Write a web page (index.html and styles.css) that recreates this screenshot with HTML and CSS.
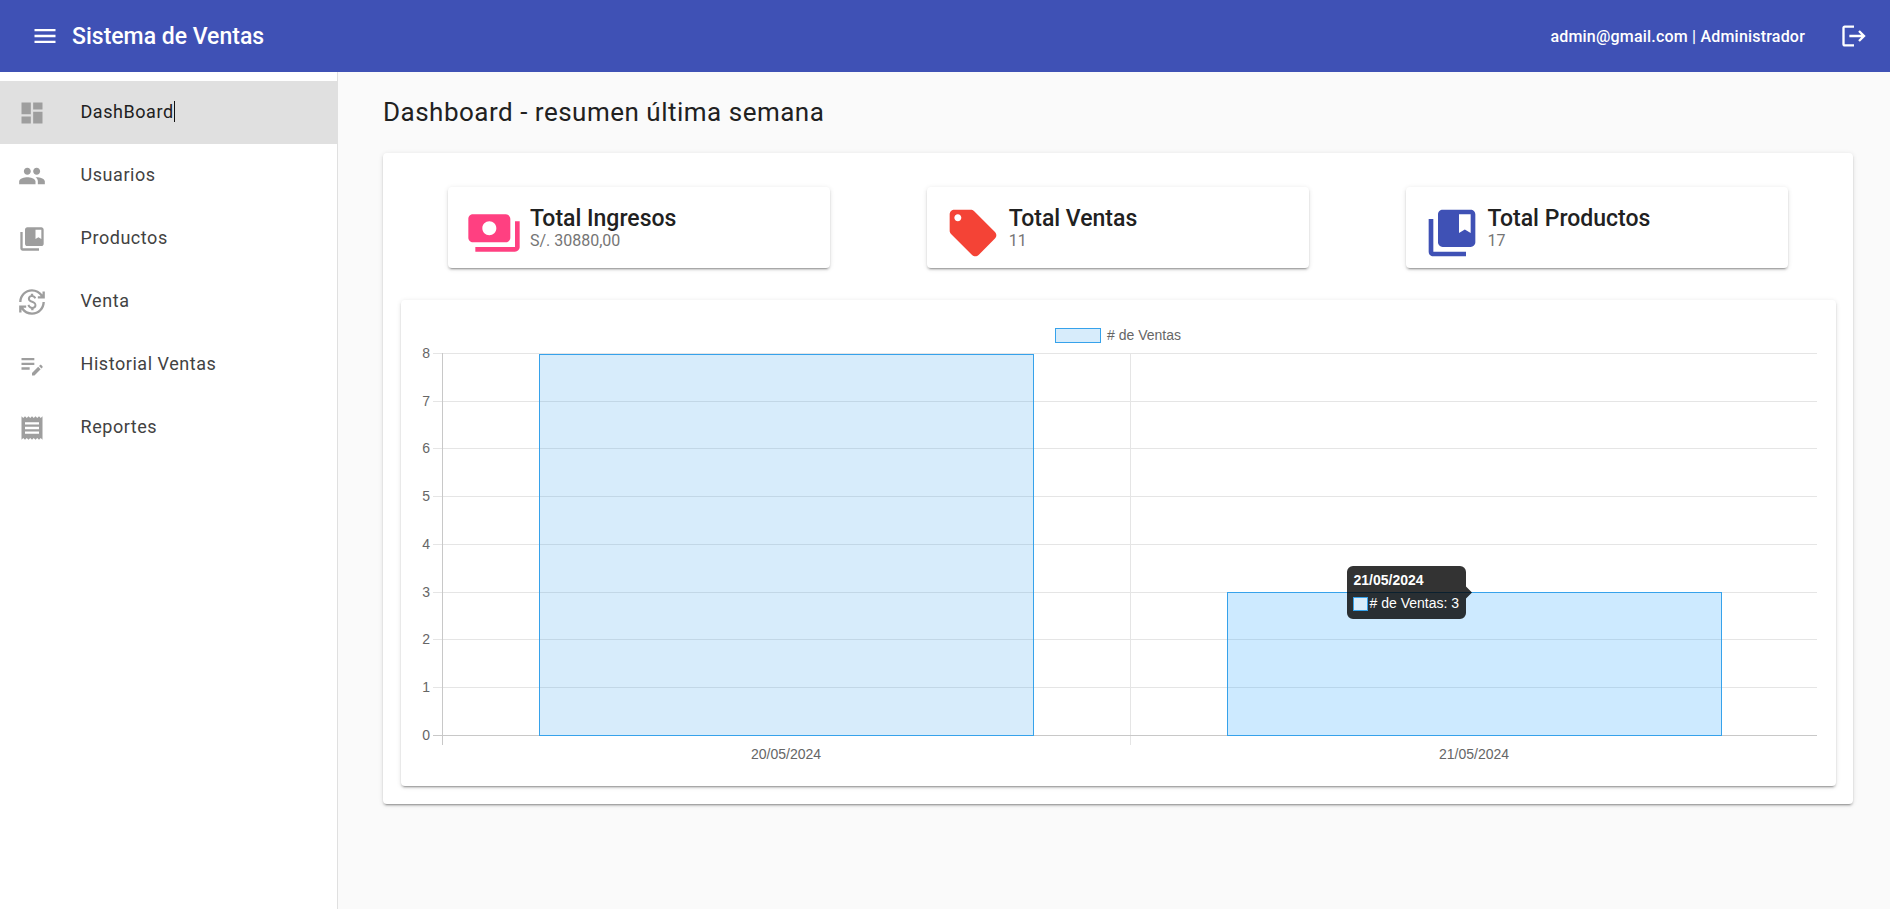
FILE: index.html
```html
<!DOCTYPE html>
<html lang="es">
<head>
<meta charset="utf-8">
<title>Sistema de Ventas</title>
<link rel="stylesheet" href="styles.css">
</head>
<body>
<header class="toolbar">
  <svg class="menu-icon" viewBox="0 0 24 24"><path d="M3 18h18v-2H3v2zm0-5h18v-2H3v2zm0-7v2h18V6H3z"/></svg>
  <span class="brand">Sistema de Ventas</span>
  <span class="user">admin@gmail.com | Administrador</span>
  <svg class="logout-icon" viewBox="0 0 24 24"><path d="M17 7l-1.41 1.41L18.17 11H8v2h10.17l-2.58 2.58L17 17l5-5zM4 5h8V3H4c-1.1 0-2 .9-2 2v14c0 1.1.9 2 2 2h8v-2H4V5z"/></svg>
</header>
<div class="shell">
  <nav class="sidebar">
    <a class="nav-item active">
      <svg class="nav-icon" viewBox="0 0 24 24"><path d="M3 13h8V3H3v10zm0 8h8v-6H3v6zm10 0h8V11h-8v10zm0-18v6h8V3h-8z"/></svg>
      <span class="nav-label caret">DashBoard</span>
    </a>
    <a class="nav-item">
      <svg class="nav-icon" viewBox="0 0 24 24"><path d="M16 11c1.66 0 2.99-1.34 2.99-3S17.66 5 16 5c-1.66 0-3 1.34-3 3s1.34 3 3 3zm-8 0c1.66 0 2.99-1.34 2.99-3S9.66 5 8 5C6.34 5 5 6.34 5 8s1.34 3 3 3zm0 2c-2.33 0-7 1.17-7 3.5V19h14v-2.5c0-2.33-4.67-3.5-7-3.5zm8 0c-.29 0-.62.02-.97.05 1.16.84 1.97 1.97 1.97 3.45V19h6v-2.5c0-2.33-4.67-3.5-7-3.5z"/></svg>
      <span class="nav-label">Usuarios</span>
    </a>
    <a class="nav-item">
      <svg class="nav-icon" viewBox="0 0 24 24"><path d="M4 6H2v14c0 1.1.9 2 2 2h14v-2H4V6zm16-4H8c-1.1 0-2 .9-2 2v12c0 1.1.9 2 2 2h12c1.1 0 2-.9 2-2V4c0-1.1-.9-2-2-2zm0 10l-2.5-1.5L15 12V4h5v8z"/></svg>
      <span class="nav-label">Productos</span>
    </a>
    <a class="nav-item">
      <svg class="nav-icon" viewBox="0 0 24 24"><path d="M12.89 11.1c-1.78-.59-2.64-.96-2.64-1.9 0-1.02 1.11-1.39 1.81-1.39 1.31 0 1.79.99 1.9 1.34l1.58-.67c-.15-.44-.82-1.91-2.54-2.21V5h-2v1.29c-2.48.56-2.49 2.86-2.49 2.96 0 2.27 2.25 2.91 3.35 3.31 1.58.56 2.28 1.07 2.28 2.03 0 1.13-1.05 1.61-1.98 1.61-1.82 0-2.34-1.87-2.4-2.09l-1.66.67c.63 2.19 2.28 2.78 3.2 2.96V19h2v-1.25c.65-.11 2.5-.5 2.5-2.98 0-1.31-.57-2.46-2.91-3.67z"/><path d="M3 21H1v-6h6v2H4.52c1.65 2.41 4.4 4 7.48 4 4.97 0 9-4.03 9-9h2c0 6.08-4.92 11-11 11-3.72 0-7.01-1.85-9-4.67V21zM1 12C1 5.92 5.92 1 12 1c3.72 0 7.01 1.85 9 4.67V3h2v6h-6V7h2.48C17.83 4.59 15.08 3 12 3c-4.97 0-9 4.03-9 9H1z"/></svg>
      <span class="nav-label">Venta</span>
    </a>
    <a class="nav-item">
      <svg class="nav-icon" viewBox="0 0 24 24"><path d="M3 10h11v2H3v-2zm0-2h11V6H3v2zm0 8h7v-2H3v2zm15.01-3.13.71-.71c.39-.39 1.02-.39 1.41 0l.71.71c.39.39.39 1.02 0 1.41l-.71.71-2.12-2.12zm-.71.71-5.3 5.3V21h2.12l5.3-5.3-2.12-2.12z"/></svg>
      <span class="nav-label">Historial Ventas</span>
    </a>
    <a class="nav-item">
      <svg class="nav-icon" viewBox="0 0 24 24"><path d="M18 17H6v-2h12v2zm0-4H6v-2h12v2zm0-4H6V7h12v2zM3 22l1.5-1.5L6 22l1.5-1.5L9 22l1.5-1.5L12 22l1.5-1.5L15 22l1.5-1.5L18 22l1.5-1.5L21 22V2l-1.5 1.5L18 2l-1.5 1.5L15 2l-1.5 1.5L12 2l-1.5 1.5L9 2 7.5 3.5 6 2 4.5 3.5 3 2v20z"/></svg>
      <span class="nav-label">Reportes</span>
    </a>
  </nav>
  <main class="content">
    <h1 class="page-title">Dashboard - resumen última semana</h1>
    <section class="panel">
      <div class="stats">
        <div class="stat-col">
          <article class="stat-card">
            <svg class="stat-icon pink" viewBox="0 0 24 24"><path d="M19 14V6c0-1.1-.9-2-2-2H3c-1.1 0-2 .9-2 2v8c0 1.1.9 2 2 2h14c1.1 0 2-.9 2-2zm-9-1c-1.66 0-3-1.34-3-3s1.34-3 3-3 3 1.34 3 3-1.34 3-3 3zm13-6v11c0 1.1-.9 2-2 2H4v-2h17V7h2z"/></svg>
            <div class="stat-text">
              <div class="stat-title">Total Ingresos</div>
              <div class="stat-value">S/. 30880,00</div>
            </div>
          </article>
        </div>
        <div class="stat-col">
          <article class="stat-card">
            <svg class="stat-icon red" viewBox="0 0 24 24"><path d="M21.41 11.58l-9-9C12.05 2.22 11.55 2 11 2H4c-1.1 0-2 .9-2 2v7c0 .55.22 1.05.59 1.42l9 9c.36.36.86.58 1.41.58.55 0 1.05-.22 1.41-.59l7-7c.37-.36.59-.86.59-1.41 0-.55-.23-1.06-.59-1.42zM5.5 7C4.67 7 4 6.33 4 5.5S4.67 4 5.5 4 7 4.67 7 5.5 6.33 7 5.5 7z"/></svg>
            <div class="stat-text">
              <div class="stat-title">Total Ventas</div>
              <div class="stat-value">11</div>
            </div>
          </article>
        </div>
        <div class="stat-col">
          <article class="stat-card">
            <svg class="stat-icon indigo" viewBox="0 0 24 24"><path d="M4 6H2v14c0 1.1.9 2 2 2h14v-2H4V6zm16-4H8c-1.1 0-2 .9-2 2v12c0 1.1.9 2 2 2h12c1.1 0 2-.9 2-2V4c0-1.1-.9-2-2-2zm0 10l-2.5-1.5L15 12V4h5v8z"/></svg>
            <div class="stat-text">
              <div class="stat-title">Total Productos</div>
              <div class="stat-value">17</div>
            </div>
          </article>
        </div>
      </div>
      <div class="chart-card">
        <svg class="chart" viewBox="401 300 1435 486" width="1435" height="486">
          <g class="grid">
            <path d="M433 353.5H1817M433 401.5H1817M433 448.5H1817M433 496.5H1817M433 544.5H1817M433 592.5H1817M433 639.5H1817M433 687.5H1817"/>
            <path d="M1130.5 353V745"/>
          </g>
          <path class="axis" d="M433 735.5H1817M442.5 353V745"/>
          <rect class="bar" x="539.5" y="354.5" width="494" height="381"/>
          <rect class="bar hover" x="1227.5" y="592.5" width="494" height="143"/>
          <rect class="legend-box" x="1055.5" y="328.5" width="45" height="14"/>
          <text class="lbl" x="1107" y="340">
            # de Ventas
          </text>
          <g class="lbl end">
            <text x="430" y="358">8</text>
            <text x="430" y="406">7</text>
            <text x="430" y="453">6</text>
            <text x="430" y="501">5</text>
            <text x="430" y="549">4</text>
            <text x="430" y="597">3</text>
            <text x="430" y="644">2</text>
            <text x="430" y="692">1</text>
            <text x="430" y="740">0</text>
          </g>
          <g class="lbl mid">
            <text x="786" y="759">20/05/2024</text>
            <text x="1474" y="759">21/05/2024</text>
          </g>
          <g class="tip">
            <path class="tip-bg" d="M1353 566H1460a6 6 0 0 1 6 6V586.5L1472 592.5L1466 598.5V613a6 6 0 0 1-6 6H1353a6 6 0 0 1-6-6V572a6 6 0 0 1 6-6Z"/>
            <text class="tip-title" x="1353.5" y="585">21/05/2024</text>
            <rect class="tip-swatch" x="1353.5" y="597.5" width="14" height="13"/>
            <text class="tip-body" x="1369.5" y="608">
              # de Ventas: 3
            </text>
          </g>
        </svg>
      </div>
    </section>
  </main>
</div>
</body>
</html>
```
FILE: styles.css
```css
* { box-sizing: border-box; }
html, body { height: 100%; }
body {
  margin: 0;
  display: flex;
  flex-direction: column;
  overflow: hidden;
  background: #fafafa;
  font-family: Roboto, "Liberation Sans", sans-serif;
  color: #212121;
}
.toolbar {
  flex: none;
  height: 72px;
  display: flex;
  align-items: center;
  padding: 0 22px 0 31px;
  background: #3f51b5;
  color: #fff;
}
.menu-icon { width: 28px; height: 28px; fill: #fff; }
.brand { margin-left: 13px; font-size: 23px; font-weight: 500; }
.user { margin-left: auto; margin-right: 35px; font-size: 16px; font-weight: 500; letter-spacing: .2px; }
.logout-icon { width: 28px; height: 28px; fill: #fff; }
.shell { flex: 1; display: flex; min-height: 0; }
.sidebar {
  flex: none;
  width: 338px;
  padding-top: 9px;
  background: #fff;
  border-right: 1px solid #e0e0e0;
}
.nav-item {
  height: 63px;
  display: flex;
  align-items: center;
  padding-left: 17.5px;
  color: #424242;
}
.nav-item.active { background: #e0e0e0; color: #212121; }
.nav-icon { flex: none; width: 28px; height: 28px; fill: #9e9e9e; }
.nav-label { margin: 0 0 2px 35px; font-size: 18px; line-height: 21px; letter-spacing: .55px; }
.caret { border-right: 1px solid #111; }
.content { flex: 1; min-width: 0; padding: 0 37px 0 45px; }
.page-title {
  margin: 24px 0 0;
  height: 33px;
  font-size: 26px;
  line-height: 33px;
  font-weight: 400;
  letter-spacing: .5px;
}
.panel {
  margin-top: 24px;
  height: 651px;
  padding: 34px 17px 18px 18px;
  background: #fff;
  border-radius: 4px;
  box-shadow: 0 3px 1px -2px rgba(0,0,0,.2), 0 2px 2px 0 rgba(0,0,0,.14), 0 1px 5px 0 rgba(0,0,0,.12);
}
.stats { display: flex; margin: 0 0 0 -1.5px; }
.stat-col { flex: 1; display: flex; justify-content: center; }
.stat-card {
  width: 382px;
  height: 81px;
  display: flex;
  padding: 18px 18px 0;
  background: #fff;
  border-radius: 4px;
  box-shadow: 0 3px 1px -2px rgba(0,0,0,.2), 0 2px 2px 0 rgba(0,0,0,.14), 0 1px 5px 0 rgba(0,0,0,.12);
}
.stat-icon { flex: none; width: 56px; height: 56px; }
.pink { fill: #ff4081; }
.red { fill: #f44336; }
.indigo { fill: #3f51b5; }
.stat-text { margin: 1px 0 0 8px; }
.stat-title { font-size: 23px; line-height: 26px; font-weight: 500; color: #212121; }
.stat-value { margin-top: -1px; font-size: 16px; line-height: 20px; color: #757575; }
.chart-card {
  margin-top: 32px;
  height: 486px;
  background: #fff;
  border-radius: 4px;
  box-shadow: 0 3px 1px -2px rgba(0,0,0,.2), 0 2px 2px 0 rgba(0,0,0,.14), 0 1px 5px 0 rgba(0,0,0,.12);
}
.chart { display: block; }
.grid path { fill: none; stroke: #e5e5e5; stroke-width: 1; }
.axis { fill: none; stroke: #c8c8c8; stroke-width: 1; }
.bar { fill: rgba(54,162,235,.2); stroke: #36a2eb; stroke-width: 1; }
.bar.hover { fill: rgba(54,170,255,.25); }
.legend-box { fill: rgba(54,162,235,.2); stroke: #36a2eb; stroke-width: 1; }
.lbl { font-family: "Liberation Sans", Arial, sans-serif; font-size: 14px; fill: #666; }
.end { text-anchor: end; }
.mid { text-anchor: middle; }
.tip-bg { fill: rgba(0,0,0,.8); }
.tip-title { font-family: "Liberation Sans", Arial, sans-serif; font-size: 14px; font-weight: 700; fill: #fff; }
.tip-body { font-family: "Liberation Sans", Arial, sans-serif; font-size: 14px; fill: #fff; }
.tip-swatch { fill: #d7ecfb; stroke: #36a2eb; stroke-width: 1; }
```
